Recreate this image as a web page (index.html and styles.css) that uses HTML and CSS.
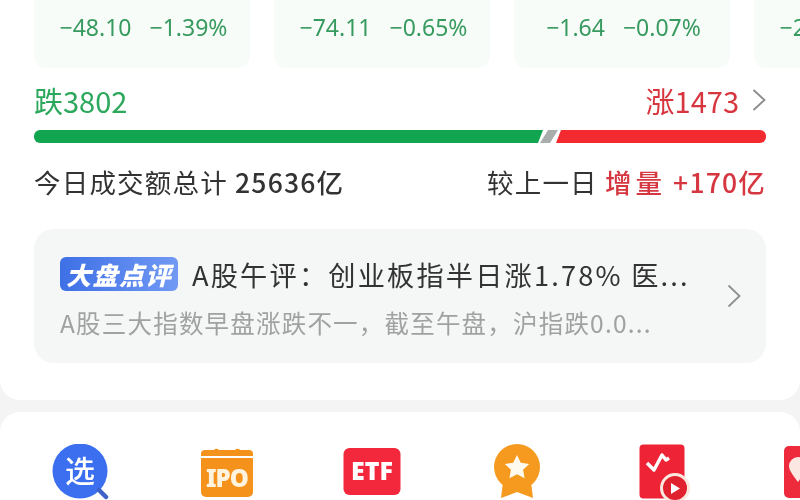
FILE: index.html
```html
<!DOCTYPE html>
<html lang="zh-CN">
<head>
<meta charset="utf-8">
<title>行情</title>
<link rel="stylesheet" href="styles.css">
</head>
<body>
<div class="page">
  <section class="card market">
    <div class="tiles">
      <div class="tile"><span>−48.10</span><span>−1.39%</span></div>
      <div class="tile"><span>−74.11</span><span>−0.65%</span></div>
      <div class="tile"><span>−1.64</span><span>−0.07%</span></div>
      <div class="tile"><span>−21.30</span><span>−0.90%</span></div>
    </div>
    <div class="breadth">
      <span class="fall">跌3802</span>
      <span class="rise">涨1473
        <svg class="chev" width="14" height="24" viewBox="0 0 14 24"><path d="M1.500 2 12.500 12 1.500 22" fill="none" stroke="#8b8b8b" stroke-width="1.800"/></svg>
      </span>
    </div>
    <div class="bar">
      <i class="bar-green"></i><i class="bar-gray"></i><i class="bar-red"></i>
    </div>
    <div class="volume">
      <span>今日成交额总计 <b>25636亿</b></span>
      <span>较上一日 <em class="delta-word">增量</em> <em>+170亿</em></span>
    </div>
    <div class="comment">
      <div class="comment-text">
        <div class="comment-title"><span class="badge">大盘点评</span><span class="title-text">A股午评：创业板指半日涨1.78% 医...</span></div>
        <div class="comment-sub">A股三大指数早盘涨跌不一，截至午盘，沪指跌0.0...</div>
      </div>
      <svg class="chev-lg" width="14" height="24" viewBox="0 0 14 24"><path d="M1.500 1.500 12.500 12 1.500 22.500" fill="none" stroke="#8f8f8f" stroke-width="1.800"/></svg>
    </div>
  </section>
  <section class="card tools">
    <div class="tool">
      <svg width="60" height="56" viewBox="0 0 60 56"><circle cx="28" cy="27" r="27.500" fill="#3b6ff0"/><path d="M47 46l7 7" stroke="#3d62c8" stroke-width="4.500" stroke-linecap="round"/><text x="28" y="38" text-anchor="middle" class="ico-cn">选</text></svg>
    </div>
    <div class="tool">
      <svg width="54" height="56" viewBox="0 0 54 56"><path d="M1 10a4 4 0 0 1 4-4h9a3 3 0 0 1 5 0h16a3 3 0 0 1 5 0h9a4 4 0 0 1 4 4v2H1z" fill="#f4921c"/><path d="M1 14h52v34a5 5 0 0 1-5 5H6a5 5 0 0 1-5-5z" fill="#f4921c"/><text x="27" y="43" text-anchor="middle" class="ico-en ipo">IPO</text></svg>
    </div>
    <div class="tool">
      <svg width="58" height="52" viewBox="0 0 58 52"><rect x="0.500" y="4" width="57" height="47" rx="6" fill="#f4283c"/><text x="29" y="36" text-anchor="middle" class="ico-en etf">ETF</text></svg>
    </div>
    <div class="tool">
      <svg width="46" height="56" viewBox="0 0 46 56"><path d="M9 38 7 54l16-6 16 6-2-16z" fill="#f59a1e"/><circle cx="23" cy="23" r="23" fill="#f59a1e"/><path d="M23 11l3.800 7.800 8.400 1.100-6.100 5.900 1.500 8.500L23 30.300l-7.600 4 1.500-8.500-6.100-5.900 8.400-1.100z" fill="#fffaf0"/></svg>
    </div>
    <div class="tool">
      <svg class="tool-over" width="46" height="56" viewBox="0 0 46 56"><rect x="0.500" y="0.500" width="45" height="54" rx="4" fill="#ee2436"/><path d="M8 19l7 7 8-15 4 5 3-2" fill="none" stroke="#fff" stroke-width="3.500" stroke-linejoin="round"/><circle cx="36" cy="44" r="13.500" fill="#e0222f" stroke="#fbe9df" stroke-width="3"/><path d="M32 39l9 5.500-9 5.500z" fill="#fff"/></svg>
    </div>
    <div class="tool">
      <svg width="54" height="56" viewBox="0 0 54 56"><rect x="4" y="2" width="50" height="52" rx="5" fill="#ee2b3c"/><path d="M18 38C12 30 9 26 9 22a9 9 0 0 1 18 0c0 4-3 8-9 16z" fill="#fde7e2"/></svg>
    </div>
  </section>
</div>
</body>
</html>
```

FILE: styles.css
```css
* { box-sizing: border-box; }
html, body { margin: 0; height: 100%; overflow: hidden; }
body { background: #f4f4f4; font-family: "Noto Sans CJK SC", "Noto Sans", sans-serif; }
.page { width: 800px; height: 500px; overflow: hidden; display: flex; flex-direction: column; gap: 12px; filter: blur(0.5px); }
.card { background: #fff; }
.market { height: 400px; flex: none; padding: 0 34px; border-radius: 0 0 20px 20px; }
.tiles { display: flex; gap: 24px; height: 68px; width: 960px; }
.tile { flex: none; width: 216px; height: 68px; background: #f8fcf9; border-radius: 0 0 12px 12px; display: flex; justify-content: center; gap: 18px; padding: 9px 0 0 3px; font-family: "Noto Sans", sans-serif; font-size: 23px; line-height: 36px; color: #379a5e; }
.breadth { display: flex; justify-content: space-between; align-items: center; height: 40px; margin-top: 12px; font-size: 29px; line-height: 40px; }
.fall { color: #2ba85b; }
.rise { color: #d8363f; display: flex; align-items: center; gap: 13px; }
.chev { margin-top: -1px; }
.bar { display: flex; height: 13px; margin-top: 10px; }
.bar i { display: block; height: 100%; }
.bar-green { width: 509px; background: #12a550; border-radius: 6px 0 0 6px; clip-path: polygon(0 0, 100% 0, calc(100% - 5px) 100%, 0 100%); }
.bar-gray { width: 18px; margin-left: -3px; background: #a9adab; clip-path: polygon(8px 0, 100% 0, 10px 100%, 0 100%); }
.bar-red { flex: 1; margin-left: -2px; background: #f42a31; border-radius: 0 6px 6px 0; clip-path: polygon(5px 0, 100% 0, 100% 100%, 0 100%); }
.volume { display: flex; justify-content: space-between; margin-top: 19px; height: 40px; font-size: 26.500px; line-height: 40px; letter-spacing: 1.200px; color: #333; }
.volume b { font-weight: 500; }
.volume em { font-style: normal; font-weight: 500; color: #d5363f; }
.volume .delta-word { letter-spacing: 4px; }
.comment { display: flex; align-items: center; justify-content: space-between; margin-top: 27px; height: 134px; padding: 0 25px 0 26px; background: #f5f6f6; border-radius: 20px; }
.comment-text { display: flex; flex-direction: column; gap: 13px; padding-top: 2px; }
.comment-title { display: flex; align-items: center; gap: 14px; height: 38px; font-size: 27.200px; color: #333; white-space: nowrap; }
.title-text { letter-spacing: 2.200px; }
.badge { background: linear-gradient(90deg, #3e70e6, #7199f4); color: #fff; font-size: 25px; line-height: 34px; height: 34px; width: 118px; border-radius: 6px; font-weight: 900; font-style: italic; text-align: center; overflow: hidden; letter-spacing: 1.500px; }
.comment-sub { font-size: 24.500px; line-height: 34px; letter-spacing: 1.200px; color: #a0a2a2; white-space: nowrap; }
.tools { flex: 1; display: flex; padding: 32px 0 0 9px; border-radius: 20px 20px 0 0; }
.tool { flex: none; width: 145px; display: flex; justify-content: center; align-items: flex-start; }
.tool-over { overflow: visible; }
.ico-cn { font-size: 30px; fill: #fff; font-weight: 500; }
.ico-en { fill: #fff; font-weight: 900; font-family: "Noto Sans", sans-serif; }
.ipo { font-size: 24px; fill: #fff3dd; letter-spacing: -1px; }
.etf { font-size: 25px; }
```
